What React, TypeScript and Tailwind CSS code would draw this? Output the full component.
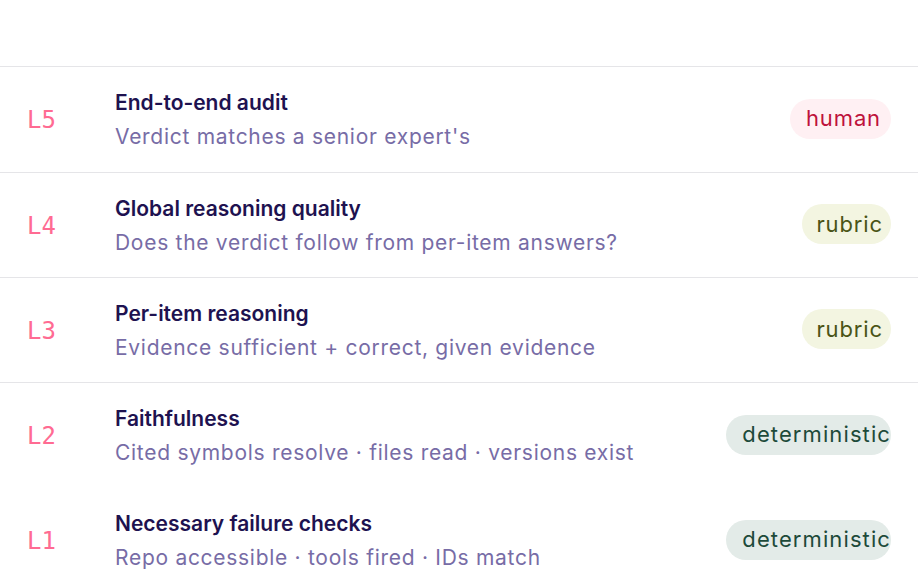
const ROWS = [
  { level: 'L5', title: 'End-to-end audit', desc: "Verdict matches a senior expert's", tag: 'human', border: true },
  { level: 'L4', title: 'Global reasoning quality', desc: 'Does the verdict follow from per-item answers?', tag: 'rubric', border: true },
  { level: 'L3', title: 'Per-item reasoning', desc: 'Evidence sufficient + correct, given evidence', tag: 'rubric', border: true },
  { level: 'L2', title: 'Faithfulness', desc: 'Cited symbols resolve · files read · versions exist', tag: 'deterministic', border: false },
  { level: 'L1', title: 'Necessary failure checks', desc: 'Repo accessible · tools fired · IDs match', tag: 'deterministic', border: false },
];

function Tag({ kind }: { kind: string }) {
  if (kind === 'human') {
    return (
      <span className="h-10 mb-[2px] inline-flex items-center rounded-full bg-[#fff0f3] pl-4 pr-[10px] text-[22px] tracking-[0.04em] text-[#be123c]">
        human
      </span>
    );
  }
  if (kind === 'rubric') {
    return (
      <span className="h-10 mb-[2px] inline-flex items-center rounded-full bg-[#f3f5e1] pl-[14px] pr-2 text-[22px] tracking-[0.04em] text-[#4a5416]">
        rubric
      </span>
    );
  }
  return (
    <span className="h-10 mb-[2px] inline-flex items-center rounded-full bg-[#e3ebe8] pl-4 pr-0 text-[22px] tracking-[0.05em] text-[#1d4a3a] whitespace-nowrap">
      deterministic
    </span>
  );
}

export default function App() {
  return (
    <div className="w-[918px] h-[582px] overflow-hidden bg-white" style={{ fontFamily: 'Inter, "Noto Sans", sans-serif' }}>
      <div className="h-[67px] border-b border-[#e5e5e8]" />
      {ROWS.map((r, i) => (
        <div
          key={r.level}
          className={`${i === 0 ? 'h-[106px]' : 'h-[105px]'} flex items-center pl-[27px] pr-[27px] ${r.border ? 'border-b border-[#e5e5e8]' : ''}`}
        >
          <div className="w-[88px] pt-[1px] text-[24px] text-[#ff6b92]" style={{ fontFamily: '"DejaVu Sans Mono", monospace' }}>
            {r.level}
          </div>
          <div className="flex-1 flex flex-col gap-[6px] pt-[1px]">
            <div className="text-[21px] leading-[28px] font-semibold text-[#1e1250]">{r.title}</div>
            <div className="text-[21px] leading-[28px] tracking-[0.034em] text-[#776ca6]">{r.desc}</div>
          </div>
          <Tag kind={r.tag} />
        </div>
      ))}
    </div>
  );
}
